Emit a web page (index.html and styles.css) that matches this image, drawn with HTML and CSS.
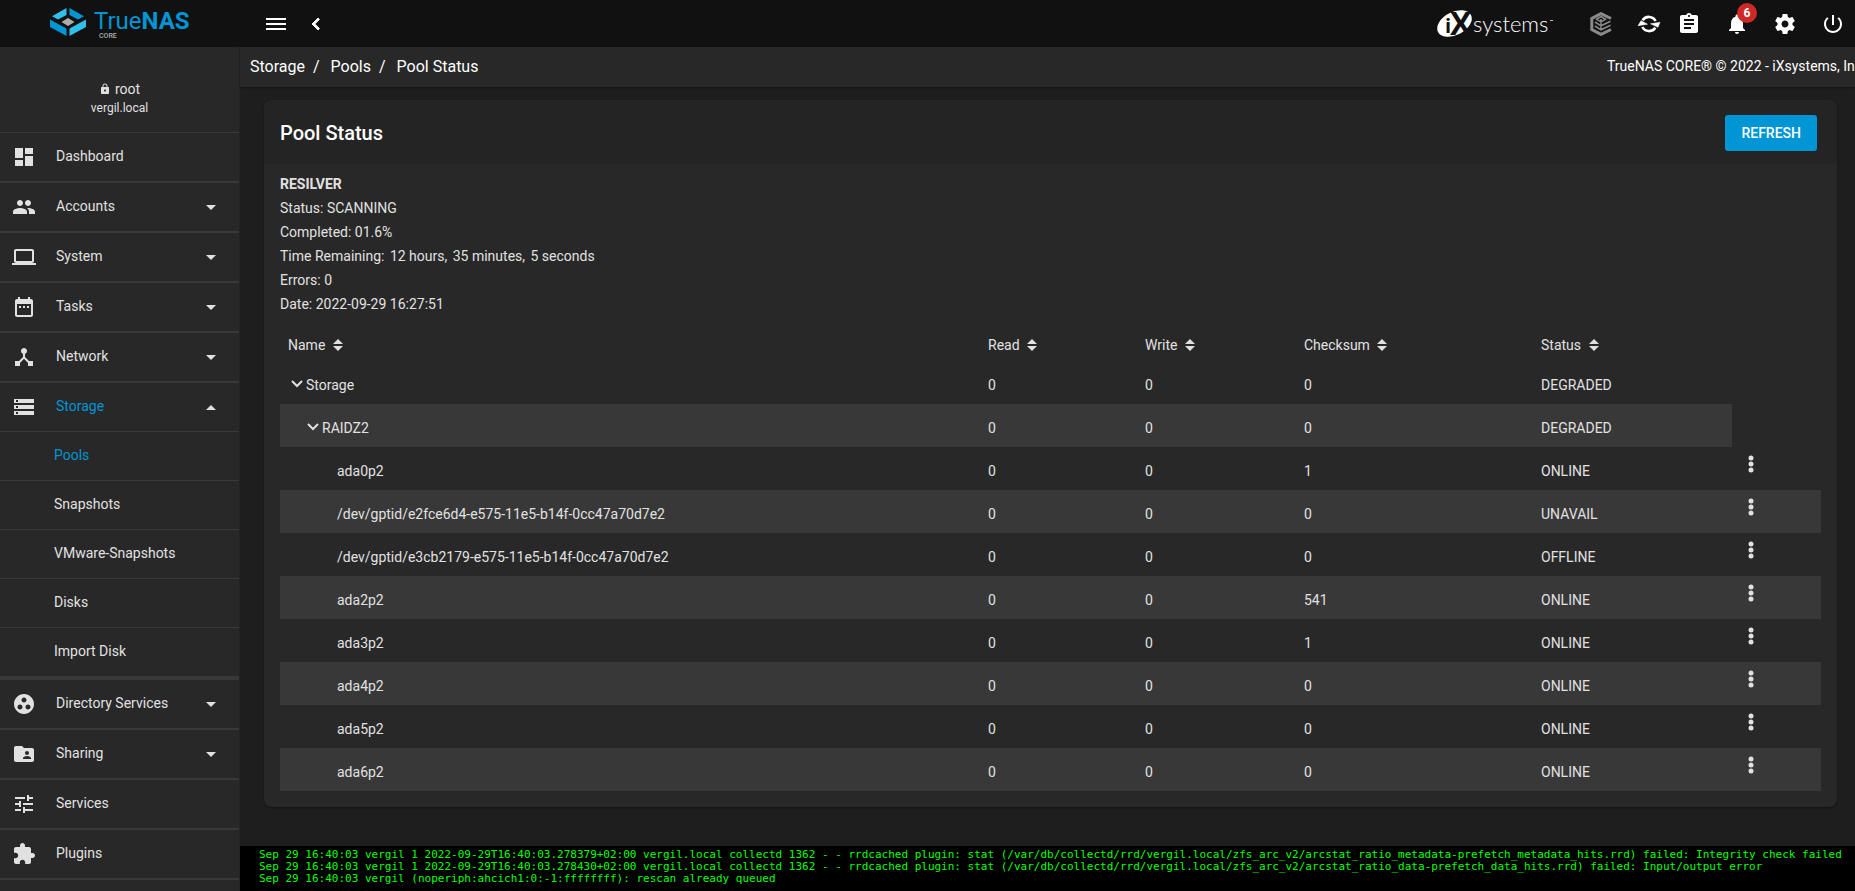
FILE: index.html
```
<!DOCTYPE html>
<html lang="en">
<head>
    <meta charset="UTF-8">
    <meta name="viewport" content="width=device-width, initial-scale=1.0">
    <title>TrueNAS - Pool Status</title>
    <link rel="stylesheet" href="styles.css">
</head>
<body>
    <header class="topbar">
        <a href="#" class="brand" aria-label="TrueNAS CORE">
            <svg class="brand-mark" viewBox="0 0 36 28">
                <path fill="#31beec" d="M16.500 0v7L8 11.500l-6-3.200z"/>
                <path fill="#0095d5" d="M19.500 0v7l8.500 4.500 6-3.200z"/>
                <path fill="#0095d5" d="M0 11.500l16.500 9V28L0 19z"/>
                <path fill="#31beec" d="M36 11.500l-16.500 9V28L36 19z"/>
                <path fill="#aeadae" d="M18 10l6.500 4-6.500 4-6.500-4z"/>
            </svg>
            <span class="brand-text">
                <span class="brand-name">True<b>NAS</b></span>
                <span class="brand-edition">CORE</span>
            </span>
        </a>
        <div class="topbar-left">
            <button class="icon-button" aria-label="Toggle menu"><svg viewBox="0 0 24 24"><path d="M2 18h20v-2H2v2zm0-5h20v-2H2v2zm0-7v2h20V6H2z"/></svg></button>
            <button class="icon-button" aria-label="Collapse"><svg viewBox="0 0 24 24"><path d="M15.400 7.400L14 6l-6 6 6 6 1.400-1.400L10.800 12z" stroke="currentColor"/></svg></button>
        </div>
        <div class="topbar-right">
            <a href="#" class="vendor" aria-label="iXsystems">
                <svg viewBox="0 0 118 30">
                    <ellipse cx="17.500" cy="14.500" rx="18.500" ry="11.500" transform="rotate(-27 17.500 14.500)" fill="#fff"/>
                    <text class="vendor-i" x="8" y="24">i</text>
                    <text class="vendor-x" x="13" y="26">X</text>
                    <text class="vendor-name" x="36" y="23">systems</text>
                    <path d="M113 11.500h3" stroke="#bbb"/>
                </svg>
            </a>
            <div class="icon-group">
                <button class="icon-button truecommand" aria-label="TrueCommand"><svg viewBox="0 0 24 24"><path fill="none" stroke="currentColor" stroke-width="3" d="M22 6.500L12 1.600 2.800 6.500v11l9.200 4.900 10-4.900"/><path fill="none" stroke="currentColor" stroke-width="1.500" d="M12 4.500l4.500 2.800L12 10 7.500 7.300zM6 10l6 3.800 9.500-4.600M6 14l6 3.800 9.500-4.600M12 7v11"/></svg></button>
                <button class="icon-button" aria-label="Sync"><svg viewBox="0 0 24 24"><path fill="none" stroke="currentColor" stroke-width="2.600" d="M5.600 8.200a7.600 7.600 0 0 1 13 .8M18.400 15.800a7.600 7.600 0 0 1-13-.8"/><path d="M13.500 11.800l9.500-1.500-2 5zM10.500 12.200L1 13.700l3-5z" stroke="currentColor" stroke-width=".5"/></svg></button>
            </div>
            <div class="icon-group">
                <button class="icon-button" aria-label="Tasks"><svg viewBox="0 0 24 24"><path d="M19 3h-4.180C14.400 1.840 13.300 1 12 1s-2.400.84-2.820 2H5c-1.100 0-2 .9-2 2v14c0 1.100.9 2 2 2h14c1.100 0 2-.9 2-2V5c0-1.100-.9-2-2-2zm-7 0c.55 0 1 .45 1 1s-.45 1-1 1-1-.45-1-1 .45-1 1-1zm2 14H7v-2h7v2zm3-4H7v-2h10v2zm0-4H7V7h10v2z"/></svg></button>
                <button class="icon-button" aria-label="Alerts, 6"><svg viewBox="0 0 24 24"><path d="M12 22c1.100 0 2-.9 2-2h-4c0 1.100.89 2 2 2zm6-6v-5c0-3.070-1.640-5.640-4.500-6.320V4c0-.83-.67-1.500-1.500-1.500s-1.500.67-1.500 1.500v.68C7.630 5.360 6 7.920 6 11v5l-2 2v1h16v-1l-2-2z"/></svg><span class="badge">6</span></button>
                <button class="icon-button" aria-label="Settings"><svg viewBox="0 0 24 24"><path d="M19.430 12.980c.04-.32.07-.64.07-.98s-.03-.66-.07-.98l2.110-1.650c.19-.15.24-.42.12-.64l-2-3.460c-.12-.22-.39-.3-.61-.22l-2.490 1c-.52-.4-1.080-.73-1.690-.98l-.38-2.650C14.460 2.180 14.250 2 14 2h-4c-.25 0-.46.18-.49.42l-.38 2.650c-.61.25-1.170.59-1.690.98l-2.490-1c-.23-.09-.49 0-.61.22l-2 3.460c-.13.22-.07.49.12.64l2.110 1.650c-.04.32-.07.65-.07.98s.03.66.07.98l-2.110 1.650c-.19.15-.24.42-.12.64l2 3.460c.12.22.39.3.61.22l2.490-1c.52.4 1.080.73 1.690.98l.38 2.650c.03.24.24.42.49.42h4c.25 0 .46-.18.49-.42l.38-2.650c.61-.25 1.170-.59 1.690-.98l2.490 1c.23.09.49 0 .61-.22l2-3.460c.12-.22.07-.49-.12-.64l-2.110-1.650zM12 15.500c-1.930 0-3.500-1.570-3.500-3.500s1.570-3.500 3.500-3.500 3.500 1.570 3.500 3.500-1.570 3.500-3.500 3.500z"/></svg></button>
                <button class="icon-button" aria-label="Power"><svg viewBox="0 0 24 24"><path d="M13 3h-2v10h2V3zm4.830 2.170l-1.420 1.420C17.990 7.860 19 9.810 19 12c0 3.870-3.130 7-7 7s-7-3.130-7-7c0-2.190 1.010-4.140 2.580-5.420L6.170 5.170C4.230 6.820 3 9.260 3 12c0 4.970 4.030 9 9 9s9-4.030 9-9c0-2.740-1.230-5.180-3.170-6.830z"/></svg></button>
            </div>
        </div>
    </header>

    <div class="layout">
        <nav class="sidebar">
            <div class="user">
                <span class="user-name"><svg viewBox="0 0 24 24"><path d="M18 8h-1V6c0-2.760-2.240-5-5-5S7 3.240 7 6v2H6c-1.100 0-2 .9-2 2v10c0 1.100.9 2 2 2h12c1.100 0 2-.9 2-2V10c0-1.100-.9-2-2-2zm-6 9c-1.100 0-2-.9-2-2s.9-2 2-2 2 .9 2 2-.9 2-2 2zm3.100-9H8.900V6c0-1.710 1.390-3.100 3.100-3.100 1.710 0 3.100 1.390 3.100 3.100v2z"/></svg>root</span>
                <span class="user-host">vergil.local</span>
            </div>
            <ul class="menu">
                <li><a href="#" class="menu-link"><svg viewBox="0 0 24 24"><path d="M3 13h8V3H3v10zm0 8h8v-6H3v6zm10 0h8V11h-8v10zm0-18v6h8V3h-8z"/></svg><span>Dashboard</span></a></li>
                <li><a href="#" class="menu-link has-children"><svg viewBox="0 0 24 24"><path d="M16 11c1.660 0 2.990-1.340 2.990-3S17.660 5 16 5s-3 1.340-3 3 1.340 3 3 3zm-8 0c1.660 0 2.990-1.340 2.990-3S9.660 5 8 5 5 6.340 5 8s1.340 3 3 3zm0 2c-2.330 0-7 1.170-7 3.500V19h14v-2.500c0-2.330-4.670-3.500-7-3.500zm8 0c-.29 0-.62.02-.97.05 1.160.84 1.970 1.970 1.970 3.450V19h6v-2.500c0-2.330-4.670-3.500-7-3.500z"/></svg><span>Accounts</span></a></li>
                <li><a href="#" class="menu-link has-children"><svg viewBox="0 0 24 24"><path d="M20 18c1.100 0 1.990-.9 1.990-2L22 6c0-1.100-.9-2-2-2H4c-1.100 0-2 .9-2 2v10c0 1.100.9 2 2 2H0v2h24v-2h-4zM4 6h16v10H4V6z"/></svg><span>System</span></a></li>
                <li><a href="#" class="menu-link has-children"><svg viewBox="0 0 24 24"><path d="M9 11H7v2h2v-2zm4 0h-2v2h2v-2zm4 0h-2v2h2v-2zm2-7h-1V2h-2v2H8V2H6v2H5c-1.110 0-1.990.9-1.990 2L3 20c0 1.100.89 2 2 2h14c1.100 0 2-.9 2-2V6c0-1.100-.9-2-2-2zm0 16H5V9h14v11z"/></svg><span>Tasks</span></a></li>
                <li><a href="#" class="menu-link has-children"><svg viewBox="0 0 24 24"><path d="M17 16l-4-4V8.820C14.160 8.400 15 7.300 15 6c0-1.660-1.340-3-3-3S9 4.340 9 6c0 1.300.84 2.400 2 2.820V12l-4 4H3v5h5v-3.050l4-4.200 4 4.200V21h5v-5h-4z"/></svg><span>Network</span></a></li>
                <li class="open">
                    <a href="#" class="menu-link has-children"><svg viewBox="0 0 24 24"><path d="M2 20h20v-4H2v4zm2-3h2v2H4v-2zM2 4v4h20V4H2zm4 3H4V5h2v2zm-4 7h20v-4H2v4zm2-3h2v2H4v-2z"/></svg><span>Storage</span></a>
                    <ul class="submenu">
                        <li><a href="#" class="active">Pools</a></li>
                        <li><a href="#">Snapshots</a></li>
                        <li><a href="#">VMware-Snapshots</a></li>
                        <li><a href="#">Disks</a></li>
                        <li><a href="#">Import Disk</a></li>
                    </ul>
                </li>
                <li><a href="#" class="menu-link has-children"><svg viewBox="0 0 24 24"><path d="M12 2C6.480 2 2 6.480 2 12s4.480 10 10 10 10-4.480 10-10S17.520 2 12 2zM8 17.500c-1.380 0-2.500-1.120-2.500-2.500s1.120-2.500 2.500-2.500 2.500 1.120 2.500 2.500-1.120 2.500-2.500 2.500zM9.500 8c0-1.380 1.120-2.500 2.500-2.500s2.500 1.120 2.500 2.500-1.120 2.500-2.500 2.500S9.500 9.380 9.500 8zm6.500 9.500c-1.380 0-2.500-1.120-2.500-2.500s1.120-2.500 2.500-2.500 2.500 1.120 2.500 2.500-1.120 2.500-2.500 2.500z"/></svg><span>Directory Services</span></a></li>
                <li><a href="#" class="menu-link has-children"><svg viewBox="0 0 24 24"><path d="M20 6h-8l-2-2H4c-1.100 0-1.990.9-1.990 2L2 18c0 1.100.9 2 2 2h16c1.100 0 2-.9 2-2V8c0-1.100-.9-2-2-2zm-5 3c1.100 0 2 .9 2 2s-.9 2-2 2-2-.9-2-2 .9-2 2-2zm4 8h-8v-1c0-1.330 2.670-2 4-2s4 .67 4 2v1z"/></svg><span>Sharing</span></a></li>
                <li><a href="#" class="menu-link"><svg viewBox="0 0 24 24"><path d="M3 17v2h6v-2H3zM3 5v2h10V5H3zm10 16v-2h8v-2h-8v-2h-2v6h2zM7 9v2H3v2h4v2h2V9H7zm14 4v-2H11v2h10zm-6-4h2V7h4V5h-4V3h-2v6z"/></svg><span>Services</span></a></li>
                <li><a href="#" class="menu-link"><svg viewBox="0 0 24 24"><path d="M20.500 11H19V7c0-1.100-.9-2-2-2h-4V3.500C13 2.120 11.880 1 10.500 1S8 2.120 8 3.500V5H4c-1.100 0-1.990.9-1.990 2v3.800H3.500c1.490 0 2.700 1.210 2.700 2.700s-1.210 2.700-2.700 2.700H2V20c0 1.100.9 2 2 2h3.800v-1.500c0-1.490 1.210-2.700 2.700-2.700 1.490 0 2.700 1.210 2.700 2.700V22H17c1.100 0 2-.9 2-2v-4h1.500c1.380 0 2.500-1.120 2.500-2.500S21.880 11 20.500 11z"/></svg><span>Plugins</span></a></li>
            </ul>
        </nav>

        <main class="main">
            <div class="breadcrumb-bar">
                <ol class="breadcrumb">
                    <li><a href="#">Storage</a></li>
                    <li><a href="#">Pools</a></li>
                    <li><a href="#">Pool Status</a></li>
                </ol>
                <span class="copyright">TrueNAS CORE® © 2022 - iXsystems, Inc.</span>
            </div>

            <section class="card">
                <div class="card-header">
                    <h1>Pool Status</h1>
                    <button class="refresh">REFRESH</button>
                </div>
                <div class="card-body">
                    <div class="scan">
                        <p><b>RESILVER</b></p>
                        <p>Status: SCANNING</p>
                        <p>Completed: 01.6%</p>
                        <p>Time Remaining: <span>12 hours,</span> <span>35 minutes,</span> <span>5 seconds</span></p>
                        <p>Errors: 0</p>
                        <p>Date: 2022-09-29 16:27:51</p>
                    </div>
                    <table class="pool-table">
                        <colgroup>
                            <col>
                            <col class="col-read">
                            <col class="col-write">
                            <col class="col-checksum">
                            <col class="col-status">
                            <col class="col-actions">
                        </colgroup>
                        <thead>
                            <tr>
                                <th>Name <i class="sort"></i></th>
                                <th>Read <i class="sort"></i></th>
                                <th>Write <i class="sort"></i></th>
                                <th>Checksum <i class="sort"></i></th>
                                <th>Status <i class="sort"></i></th>
                            </tr>
                        </thead>
                        <tbody>
                            <tr><td><svg class="chevron" viewBox="0 0 12 8"><path d="M1 1l5 5 5-5"/></svg>Storage</td><td>0</td><td>0</td><td>0</td><td>DEGRADED</td></tr>
                            <tr><td class="level-1"><svg class="chevron" viewBox="0 0 12 8"><path d="M1 1l5 5 5-5"/></svg>RAIDZ2</td><td>0</td><td>0</td><td>0</td><td>DEGRADED</td></tr>
                            <tr><td class="level-2">ada0p2</td><td>0</td><td>0</td><td>1</td><td>ONLINE</td><td class="actions"><button class="more" aria-label="Options"><svg viewBox="0 0 6 18"><circle cx="3" cy="3" r="2.500"/><circle cx="3" cy="9" r="2.500"/><circle cx="3" cy="15" r="2.500"/></svg></button></td></tr>
                            <tr><td class="level-2">/dev/gptid/e2fce6d4-e575-11e5-b14f-0cc47a70d7e2</td><td>0</td><td>0</td><td>0</td><td>UNAVAIL</td><td class="actions"><button class="more" aria-label="Options"><svg viewBox="0 0 6 18"><circle cx="3" cy="3" r="2.500"/><circle cx="3" cy="9" r="2.500"/><circle cx="3" cy="15" r="2.500"/></svg></button></td></tr>
                            <tr><td class="level-2">/dev/gptid/e3cb2179-e575-11e5-b14f-0cc47a70d7e2</td><td>0</td><td>0</td><td>0</td><td>OFFLINE</td><td class="actions"><button class="more" aria-label="Options"><svg viewBox="0 0 6 18"><circle cx="3" cy="3" r="2.500"/><circle cx="3" cy="9" r="2.500"/><circle cx="3" cy="15" r="2.500"/></svg></button></td></tr>
                            <tr><td class="level-2">ada2p2</td><td>0</td><td>0</td><td>541</td><td>ONLINE</td><td class="actions"><button class="more" aria-label="Options"><svg viewBox="0 0 6 18"><circle cx="3" cy="3" r="2.500"/><circle cx="3" cy="9" r="2.500"/><circle cx="3" cy="15" r="2.500"/></svg></button></td></tr>
                            <tr><td class="level-2">ada3p2</td><td>0</td><td>0</td><td>1</td><td>ONLINE</td><td class="actions"><button class="more" aria-label="Options"><svg viewBox="0 0 6 18"><circle cx="3" cy="3" r="2.500"/><circle cx="3" cy="9" r="2.500"/><circle cx="3" cy="15" r="2.500"/></svg></button></td></tr>
                            <tr><td class="level-2">ada4p2</td><td>0</td><td>0</td><td>0</td><td>ONLINE</td><td class="actions"><button class="more" aria-label="Options"><svg viewBox="0 0 6 18"><circle cx="3" cy="3" r="2.500"/><circle cx="3" cy="9" r="2.500"/><circle cx="3" cy="15" r="2.500"/></svg></button></td></tr>
                            <tr><td class="level-2">ada5p2</td><td>0</td><td>0</td><td>0</td><td>ONLINE</td><td class="actions"><button class="more" aria-label="Options"><svg viewBox="0 0 6 18"><circle cx="3" cy="3" r="2.500"/><circle cx="3" cy="9" r="2.500"/><circle cx="3" cy="15" r="2.500"/></svg></button></td></tr>
                            <tr><td class="level-2">ada6p2</td><td>0</td><td>0</td><td>0</td><td>ONLINE</td><td class="actions"><button class="more" aria-label="Options"><svg viewBox="0 0 6 18"><circle cx="3" cy="3" r="2.500"/><circle cx="3" cy="9" r="2.500"/><circle cx="3" cy="15" r="2.500"/></svg></button></td></tr>
                        </tbody>
                    </table>
                </div>
            </section>

            <footer class="console">
                <p>Sep 29 16:40:03 vergil 1 2022-09-29T16:40:03.278379+02:00 vergil.local collectd 1362 - - rrdcached plugin: stat (/var/db/collectd/rrd/vergil.local/zfs_arc_v2/arcstat_ratio_metadata-prefetch_metadata_hits.rrd) failed: Integrity check failed</p>
                <p>Sep 29 16:40:03 vergil 1 2022-09-29T16:40:03.278430+02:00 vergil.local collectd 1362 - - rrdcached plugin: stat (/var/db/collectd/rrd/vergil.local/zfs_arc_v2/arcstat_ratio_data-prefetch_data_hits.rrd) failed: Input/output error</p>
                <p>Sep 29 16:40:03 vergil (noperiph:ahcich1:0:-1:ffffffff): rescan already queued</p>
            </footer>
        </main>
    </div>
</body>
</html>
```

FILE: styles.css
```
:root {
    --primary: #0095d5;
    --bg1: #1e1e1e;
    --bg2: #282828;
    --topbar: #111111;
    --card-head: #242424;
    --stripe: #383838;
    --lines: #383838;
    --fg1: #ffffff;
    --fg2: #e1e1e1;
}

* {
    margin: 0;
    padding: 0;
    box-sizing: border-box;
}

body {
    height: 100vh;
    display: flex;
    flex-direction: column;
    overflow: hidden;
    font-family: Roboto, sans-serif;
    font-size: 14px;
    color: var(--fg2);
    background-color: var(--bg1);
}

a {
    color: inherit;
    text-decoration: none;
}

ul,
ol {
    list-style: none;
}

button {
    font-family: inherit;
    color: inherit;
    border: none;
    background: none;
    cursor: pointer;
}

svg {
    display: block;
    flex-shrink: 0;
    fill: currentColor;
}

/* Top bar */
.topbar {
    display: flex;
    flex-shrink: 0;
    height: 47px;
    color: var(--fg1);
    background-color: var(--topbar);
}

.brand {
    display: flex;
    gap: 8px;
    width: 240px;
    padding: 8px 0 0 50px;
}

.brand-mark {
    width: 36px;
    height: 28px;
}

.brand-text {
    display: flex;
    flex-direction: column;
    color: var(--primary);
}

.brand-name {
    font-size: 24px;
    line-height: 26px;
}

.brand-name b {
    font-weight: 700;
}

.brand-edition {
    padding-left: 5px;
    font-size: 7px;
    font-weight: 500;
    line-height: 4px;
    color: #aeadae;
}

.topbar-left {
    display: flex;
    align-items: center;
    padding-left: 16px;
}

.topbar-right {
    display: flex;
    align-items: center;
    margin-left: auto;
    padding-right: 2px;
}

.icon-group {
    display: flex;
    gap: 8px;
}

.icon-button {
    position: relative;
    display: flex;
    align-items: center;
    justify-content: center;
    width: 40px;
    height: 40px;
}

.icon-button svg {
    width: 24px;
    height: 24px;
}

.truecommand {
    color: #8a8a8a;
}

.badge {
    position: absolute;
    top: -1px;
    right: 0;
    width: 20px;
    font-size: 12px;
    font-weight: 700;
    line-height: 20px;
    border-radius: 50%;
    background-color: #ce2929;
}

.vendor {
    margin-right: 26px;
}

.vendor svg {
    width: 118px;
    height: 30px;
    overflow: visible;
}

.vendor-i,
.vendor-x {
    font-family: "Open Sans", sans-serif;
    font-size: 20px;
    font-weight: 700;
    fill: #111111;
}

.vendor-x {
    font-size: 32px;
}

.vendor-name {
    font-family: Lato, sans-serif;
    font-size: 22px;
    font-weight: 300;
    fill: #ffffff;
}

.layout {
    display: flex;
    flex: 1;
    min-height: 0;
}

/* Sidebar */
.sidebar {
    flex: 0 0 240px;
    overflow: hidden;
    border-right: 1px solid #242424;
    background-color: var(--bg2);
}

.user {
    display: flex;
    flex-direction: column;
    align-items: center;
    height: 86px;
    padding-top: 32px;
    border-bottom: 1px solid var(--lines);
}

.user-name {
    display: flex;
    align-items: center;
    gap: 4px;
    line-height: 20px;
}

.user-name svg {
    width: 12px;
    height: 12px;
}

.user-host {
    font-size: 12px;
    line-height: 18px;
}

.menu > li {
    border-bottom: 2px solid var(--lines);
}

.menu > .open {
    border-bottom-width: 4px;
}

.menu-link {
    display: flex;
    align-items: center;
    gap: 20px;
    height: 48px;
    padding: 0 23px 0 12px;
    white-space: nowrap;
}

.menu-link svg {
    width: 24px;
    height: 24px;
}

.menu-link span {
    padding-bottom: 2px;
}

.has-children::after {
    content: "";
    margin-left: auto;
    border: 5px solid transparent;
    border-top-color: currentColor;
    border-bottom: none;
}

.open .has-children::after {
    border-top: none;
    border-bottom: 5px solid var(--fg2);
}

.open .menu-link span,
.submenu .active {
    color: var(--primary);
}

.submenu a {
    display: block;
    height: 49px;
    padding-left: 54px;
    line-height: 46px;
    border-top: 1px solid var(--lines);
}

/* Content */
.main {
    display: flex;
    flex-direction: column;
    flex: 1;
    min-width: 0;
}

.breadcrumb-bar {
    display: flex;
    align-items: center;
    justify-content: space-between;
    flex-shrink: 0;
    height: 40px;
    padding: 0 0 2px 10px;
    color: var(--fg1);
    background-color: var(--bg2);
    box-shadow: 0 1px 2px rgba(0, 0, 0, 0.3);
}

.breadcrumb {
    display: flex;
    font-size: 16px;
}

.breadcrumb li + li::before {
    content: "/";
    padding: 0 11px 0 8px;
}

.copyright {
    flex: 0 0 248px;
    min-width: 0;
    white-space: nowrap;
}

.card {
    margin: 13px 18px 0 24px;
    border-radius: 8px;
    background-color: var(--bg2);
    box-shadow: 0 1px 2px rgba(0, 0, 0, 0.4);
}

.card-header {
    display: flex;
    align-items: center;
    justify-content: space-between;
    height: 64px;
    padding: 1px 20px 0 16px;
    border-radius: 8px 8px 0 0;
    background-color: var(--card-head);
}

.card-header h1 {
    font-size: 20px;
    font-weight: 500;
    color: var(--fg1);
}

.refresh {
    height: 36px;
    padding: 0 16px;
    font-size: 14px;
    font-weight: 500;
    color: var(--fg1);
    border-radius: 3px;
    background-color: var(--primary);
}

.card-body {
    padding: 8px 16px 16px;
}

.scan {
    line-height: 24px;
}

.scan span {
    margin-left: 2px;
}

/* Pool table */
.pool-table {
    width: 100%;
    table-layout: fixed;
    border-collapse: collapse;
}

.col-read {
    width: 157px;
}

.col-write {
    width: 159px;
}

.col-checksum {
    width: 237px;
}

.col-status {
    width: 199px;
}

.col-actions {
    width: 89px;
}

.pool-table th {
    height: 45px;
    padding: 14px 8px 0;
    font-weight: 400;
    text-align: left;
}

.pool-table td {
    height: 43px;
    padding: 5px 8px 0;
}

.pool-table tbody tr:nth-child(even) td {
    background-color: var(--stripe);
}

.pool-table .level-1 {
    padding-left: 24px;
}

.pool-table .level-2 {
    padding-left: 57px;
}

.sort {
    display: inline-flex;
    flex-direction: column;
    gap: 2px;
    margin: 0 0 3px 4px;
    vertical-align: middle;
}

.sort::before,
.sort::after {
    content: "";
    border: 5px solid transparent;
}

.sort::before {
    border-top: none;
    border-bottom-color: currentColor;
}

.sort::after {
    border-bottom: none;
    border-top-color: currentColor;
}

.chevron {
    display: inline-block;
    width: 12px;
    height: 8px;
    margin: 0 3px 2px;
    fill: none;
    stroke: currentColor;
    stroke-width: 2;
}

.pool-table .actions {
    padding: 8px 16px 0;
    vertical-align: top;
}

.more {
    display: block;
}

.more svg {
    width: 6px;
    height: 18px;
}

/* Console messages */
.console {
    flex-shrink: 0;
    height: 45px;
    margin-top: auto;
    padding: 3px 19px;
    overflow: hidden;
    font-family: "DejaVu Sans Mono", monospace;
    font-size: 11px;
    line-height: 12px;
    white-space: nowrap;
    color: #00ff00;
    background-color: #000000;
}
```
